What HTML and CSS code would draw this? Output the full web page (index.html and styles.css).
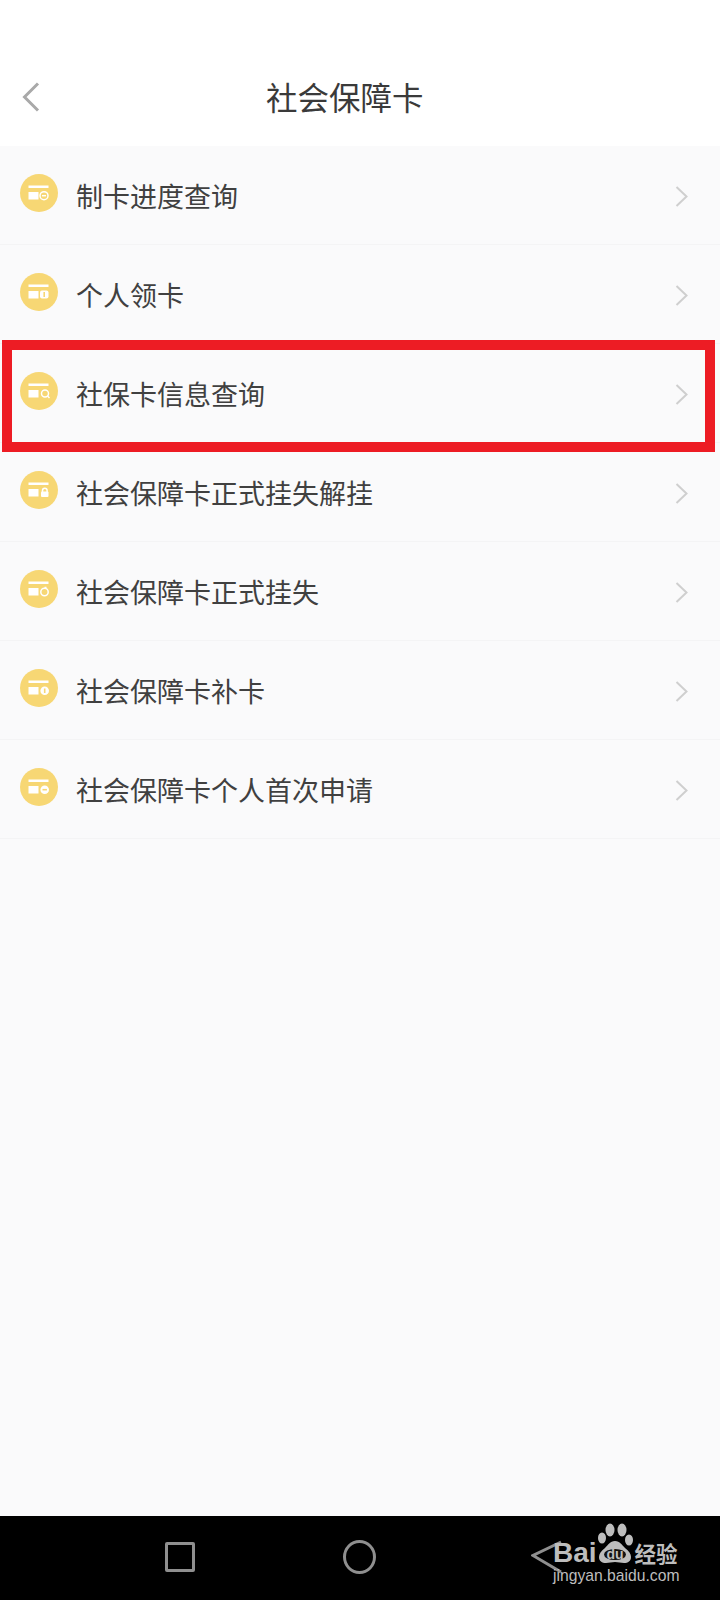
FILE: index.html
```html
<!DOCTYPE html>
<html lang="zh-CN">
  <head>
    <meta charset="UTF-8" />
    <meta name="viewport" content="width=device-width, initial-scale=1.0" />
    <title>社会保障卡</title>
    <link rel="stylesheet" href="styles.css">
  </head>
  <body>
    <main class="page">
      <header class="top-bar">
        <svg class="back" width="18" height="30" viewBox="0 0 18 30">
          <path d="M16 1.5 2.5 15 16 28.5" />
        </svg>
        <h1 class="title">社会保障卡</h1>
      </header>
      <ul class="menu">
        <li class="row">
          <svg class="badge" viewBox="0 0 38 38">
            <circle class="disc" cx="19" cy="19" r="19" />
            <rect class="mark" x="8.500" y="11.500" width="20" height="2.500" />
            <rect class="mark" x="8.500" y="18" width="10" height="7.500" />
            <circle class="ring" cx="24" cy="21.700" r="4" />
            <path class="line" d="M22 21.700h4" />
          </svg>
          <span class="label">制卡进度查询</span>
          <svg class="chevron" width="13" height="21" viewBox="0 0 13 21"><path d="M1.500 1 11.500 10.500 1.500 20" /></svg>
        </li>
        <li class="row">
          <svg class="badge" viewBox="0 0 38 38">
            <circle class="disc" cx="19" cy="19" r="19" />
            <rect class="mark" x="8.500" y="11.500" width="20" height="2.500" />
            <rect class="mark" x="8.500" y="18" width="10" height="7.500" />
            <rect class="mark" x="20" y="17.500" width="8.500" height="8" rx="2" />
            <path class="cut" d="M24.200 19v5" />
          </svg>
          <span class="label">个人领卡</span>
          <svg class="chevron" width="13" height="21" viewBox="0 0 13 21"><path d="M1.500 1 11.500 10.500 1.500 20" /></svg>
        </li>
        <li class="row row-marked">
          <svg class="badge" viewBox="0 0 38 38">
            <circle class="disc" cx="19" cy="19" r="19" />
            <rect class="mark" x="8.500" y="11.500" width="20" height="2.500" />
            <rect class="mark" x="8.500" y="18" width="10" height="7.500" />
            <circle class="ring" cx="25" cy="21.500" r="3.500" />
            <path class="line" d="M27.500 24 29.500 26" />
          </svg>
          <span class="label">社保卡信息查询</span>
          <svg class="chevron" width="13" height="21" viewBox="0 0 13 21"><path d="M1.500 1 11.500 10.500 1.500 20" /></svg>
        </li>
        <li class="row">
          <svg class="badge" viewBox="0 0 38 38">
            <circle class="disc" cx="19" cy="19" r="19" />
            <rect class="mark" x="8.500" y="11.500" width="20" height="2.500" />
            <rect class="mark" x="8.500" y="18" width="10" height="7.500" />
            <rect class="mark" x="21" y="20.500" width="7.500" height="5.500" rx="1" />
            <path class="line" d="M22.500 21v-1.500a2.300 2.300 0 0 1 4.600 0V21" />
          </svg>
          <span class="label">社会保障卡正式挂失解挂</span>
          <svg class="chevron" width="13" height="21" viewBox="0 0 13 21"><path d="M1.500 1 11.500 10.500 1.500 20" /></svg>
        </li>
        <li class="row">
          <svg class="badge" viewBox="0 0 38 38">
            <circle class="disc" cx="19" cy="19" r="19" />
            <rect class="mark" x="8.500" y="11.500" width="20" height="2.500" />
            <rect class="mark" x="8.500" y="18" width="10" height="7.500" />
            <circle class="ring" cx="24.500" cy="22" r="3.700" />
            <path class="line" d="M24.500 17.500h2" />
          </svg>
          <span class="label">社会保障卡正式挂失</span>
          <svg class="chevron" width="13" height="21" viewBox="0 0 13 21"><path d="M1.500 1 11.500 10.500 1.500 20" /></svg>
        </li>
        <li class="row">
          <svg class="badge" viewBox="0 0 38 38">
            <circle class="disc" cx="19" cy="19" r="19" />
            <rect class="mark" x="8.500" y="11.500" width="20" height="2.500" />
            <rect class="mark" x="8.500" y="18" width="10" height="7.500" />
            <circle class="mark" cx="24.700" cy="21.700" r="4.300" />
            <path class="cut" d="M24.700 19.500v4.500" />
          </svg>
          <span class="label">社会保障卡补卡</span>
          <svg class="chevron" width="13" height="21" viewBox="0 0 13 21"><path d="M1.500 1 11.500 10.500 1.500 20" /></svg>
        </li>
        <li class="row">
          <svg class="badge" viewBox="0 0 38 38">
            <circle class="disc" cx="19" cy="19" r="19" />
            <rect class="mark" x="8.500" y="11.500" width="20" height="2.500" />
            <rect class="mark" x="8.500" y="18" width="10" height="7.500" />
            <circle class="mark" cx="24.700" cy="21.700" r="4.300" />
            <path class="cut" d="M22.500 21.700h4.400" />
          </svg>
          <span class="label">社会保障卡个人首次申请</span>
          <svg class="chevron" width="13" height="21" viewBox="0 0 13 21"><path d="M1.500 1 11.500 10.500 1.500 20" /></svg>
        </li>
      </ul>
      <nav class="nav-bar">
        <span class="nav-square"></span>
        <span class="nav-circle"></span>
        <svg class="nav-back" width="32" height="34" viewBox="0 0 32 34">
          <path d="M30 2 2 15.500 30 32" />
        </svg>
        <div class="watermark">
          <div class="brand">
            <span class="brand-bai">Bai</span>
            <span class="brand-cn">经验</span>
          </div>
          <div class="site">jingyan.baidu.com</div>
          <svg class="paw" width="40" height="44" viewBox="0 0 40 44">
            <ellipse cx="15" cy="8" rx="4.500" ry="6.500" />
            <ellipse cx="27" cy="8" rx="4.500" ry="6.500" />
            <ellipse cx="7" cy="16" rx="4" ry="5.500" />
            <ellipse cx="34" cy="18" rx="4" ry="5.500" />
            <path d="M20 19c5 0 7 4 10 7 4 3 6 6 6 9 0 4-3 6-7 6-3 0-6-1-9-1s-6 1-9 1c-4 0-7-2-7-6 0-3 2-6 6-9 3-3 5-7 10-7z" />
            <ellipse class="paw-hole" cx="20" cy="32.500" rx="11" ry="5.500" />
            <text x="20" y="37" text-anchor="middle">du</text>
          </svg>
        </div>
      </nav>
    </main>
  </body>
</html>
```

FILE: styles.css
```css
* {
  box-sizing: border-box;
}
body {
  margin: 0;
  background: #fafafb;
  font-family: "Noto Sans CJK SC", "Liberation Sans", sans-serif;
}
.page {
  position: relative;
  display: flex;
  flex-direction: column;
  height: 1600px;
  overflow: hidden;
}
.top-bar {
  display: flex;
  align-items: center;
  height: 146px;
  padding: 0 0 0 22px;
  background: #fff;
}
.back {
  flex: none;
  margin-top: 47px;
}
.back path {
  fill: none;
  stroke: #a9a9a9;
  stroke-width: 3;
}
.title {
  margin: 46px 0 0 226px;
  font-size: 31.5px;
  font-weight: 400;
  line-height: 48px;
  color: #3a3a3a;
}
.menu {
  flex: 1;
  margin: 0;
  padding: 0;
  list-style: none;
}
.row {
  position: relative;
  display: flex;
  align-items: center;
  height: 99px;
  padding: 0 32px 0 20px;
  border-bottom: 1px solid #f4f4f5;
}
.row-marked::after {
  content: "";
  position: absolute;
  top: -4px;
  right: 5px;
  bottom: -10px;
  left: 2px;
  border: 10px solid #ed1c24;
  pointer-events: none;
}
.badge {
  flex: none;
  width: 38px;
  height: 38px;
  margin-bottom: 5px;
}
.disc {
  fill: #f7d774;
}
.mark {
  fill: #fff;
}
.ring,
.line {
  fill: none;
  stroke: #fff;
  stroke-width: 1.5;
}
.cut {
  fill: none;
  stroke: #f7d774;
  stroke-width: 1.6;
}
.label {
  flex: 1;
  margin: 2px 0 0 18px;
  font-size: 27px;
  line-height: 40px;
  color: #404040;
}
.chevron {
  flex: none;
  margin-top: 2px;
}
.chevron path {
  fill: none;
  stroke: #cfcfcf;
  stroke-width: 2;
}
.nav-bar {
  position: relative;
  flex: none;
  display: flex;
  align-items: center;
  height: 84px;
  padding: 0 0 2px 165px;
  background: #000;
}
.nav-square {
  width: 30px;
  height: 30px;
  border: 3px solid #8f8f8f;
  border-radius: 2px;
}
.nav-circle {
  width: 33px;
  height: 34px;
  margin-left: 148px;
  border: 3px solid #8f8f8f;
  border-radius: 50%;
}
.nav-back {
  margin-left: 155px;
}
.nav-back path {
  fill: none;
  stroke: #8f8f8f;
  stroke-width: 3;
}
.watermark {
  position: absolute;
  top: 24px;
  left: 553px;
  width: 130px;
  color: #bdbdbd;
}
.paw {
  position: absolute;
  top: -18px;
  left: 42px;
  fill: #bdbdbd;
}
.paw-hole {
  fill: #111;
}
.paw text {
  font-family: "Liberation Sans", sans-serif;
  font-size: 14px;
  font-weight: 700;
  fill: #bdbdbd;
}
.brand {
  display: flex;
  align-items: center;
  height: 26px;
}
.brand-bai {
  font-family: "Liberation Sans", sans-serif;
  font-size: 28px;
  font-weight: 700;
  line-height: 26px;
}
.brand-cn {
  margin-left: 38px;
  font-size: 21.5px;
  line-height: 26px;
  font-weight: 700;
}
.site {
  margin-top: 1px;
  font-family: "Liberation Sans", sans-serif;
  font-size: 15.700px;
  line-height: 18px;
  white-space: nowrap;
}
```
